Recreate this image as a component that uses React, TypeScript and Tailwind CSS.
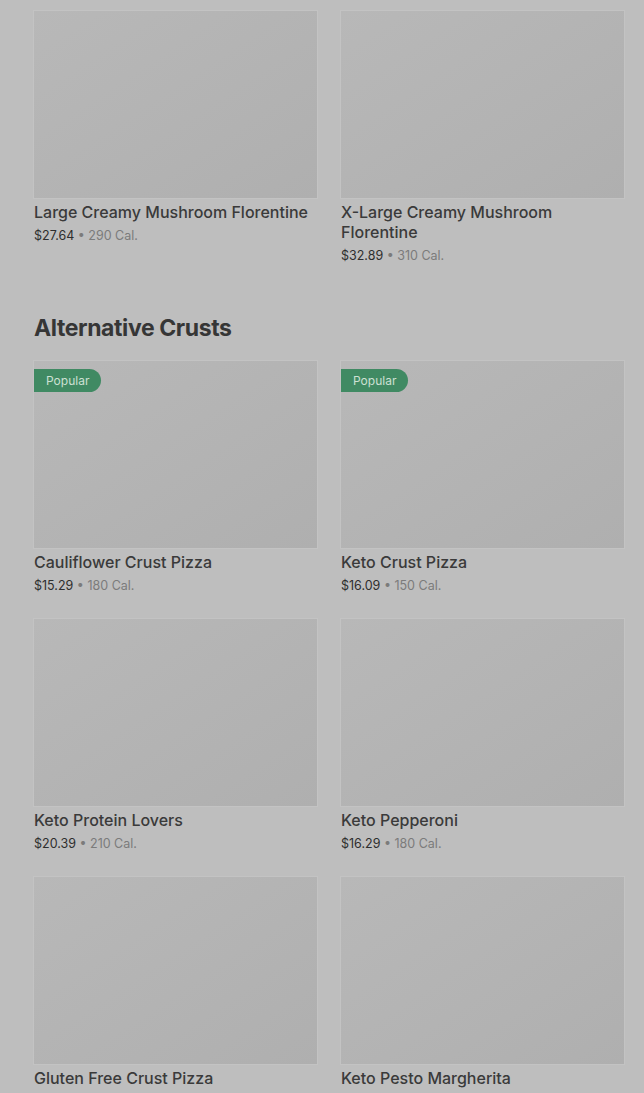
type Item = { name: string; price: string; cal: string; popular?: boolean };

const topItems: Item[] = [
  { name: "Large Creamy Mushroom Florentine", price: "$27.64", cal: "290 Cal." },
  { name: "X-Large Creamy Mushroom Florentine", price: "$32.89", cal: "310 Cal." },
];

const altCrusts: Item[] = [
  { name: "Cauliflower Crust Pizza", price: "$15.29", cal: "180 Cal.", popular: true },
  { name: "Keto Crust Pizza", price: "$16.09", cal: "150 Cal.", popular: true },
  { name: "Keto Protein Lovers", price: "$20.39", cal: "210 Cal." },
  { name: "Keto Pepperoni", price: "$16.29", cal: "180 Cal." },
  { name: "Gluten Free Crust Pizza", price: "$14.99", cal: "170 Cal." },
  { name: "Keto Pesto Margherita", price: "$17.49", cal: "190 Cal." },
];

function ItemCard({ item }: { item: Item }) {
  return (
    <div className="flex flex-col">
      <div className="relative h-[187px] bg-gradient-to-br from-[#b8b8b8] to-[#afafaf] ring-1 ring-[#c3c3c3]">
        {item.popular && (
          <span className="absolute left-0 top-2 h-[23px] flex items-center pl-3 pr-3 rounded-r-full bg-[#408a63] text-[12px] text-[#cde0d3]">
            Popular
          </span>
        )}
      </div>
      <div className="pt-1 text-[16px] leading-5 font-medium text-[#3a3a3a]">{item.name}</div>
      <div className="pt-1 text-[12.5px] leading-5 text-[#2e2e2e]">
        {item.price}
        <span className="text-[#7b7b7b]"> • {item.cal}</span>
      </div>
    </div>
  );
}

export default function App() {
  return (
    <div
      className="min-h-[1093px] bg-[#bebebe] pl-[34px] pr-[20px] pt-[11px] overflow-hidden"
      style={{ fontFamily: "Inter, 'Liberation Sans', sans-serif" }}
    >
      <div className="grid grid-cols-2 gap-x-6 gap-y-[23px]">
        {topItems.map((it) => (
          <ItemCard key={it.name} item={it} />
        ))}
      </div>

      <h2 className="mt-[48px] mb-[19px] text-[23px] leading-7 font-bold tracking-[-0.4px] text-[#363636]">
        Alternative Crusts
      </h2>

      <div className="grid grid-cols-2 gap-x-6 gap-y-[23px]">
        {altCrusts.map((it) => (
          <ItemCard key={it.name} item={it} />
        ))}
      </div>
    </div>
  );
}
